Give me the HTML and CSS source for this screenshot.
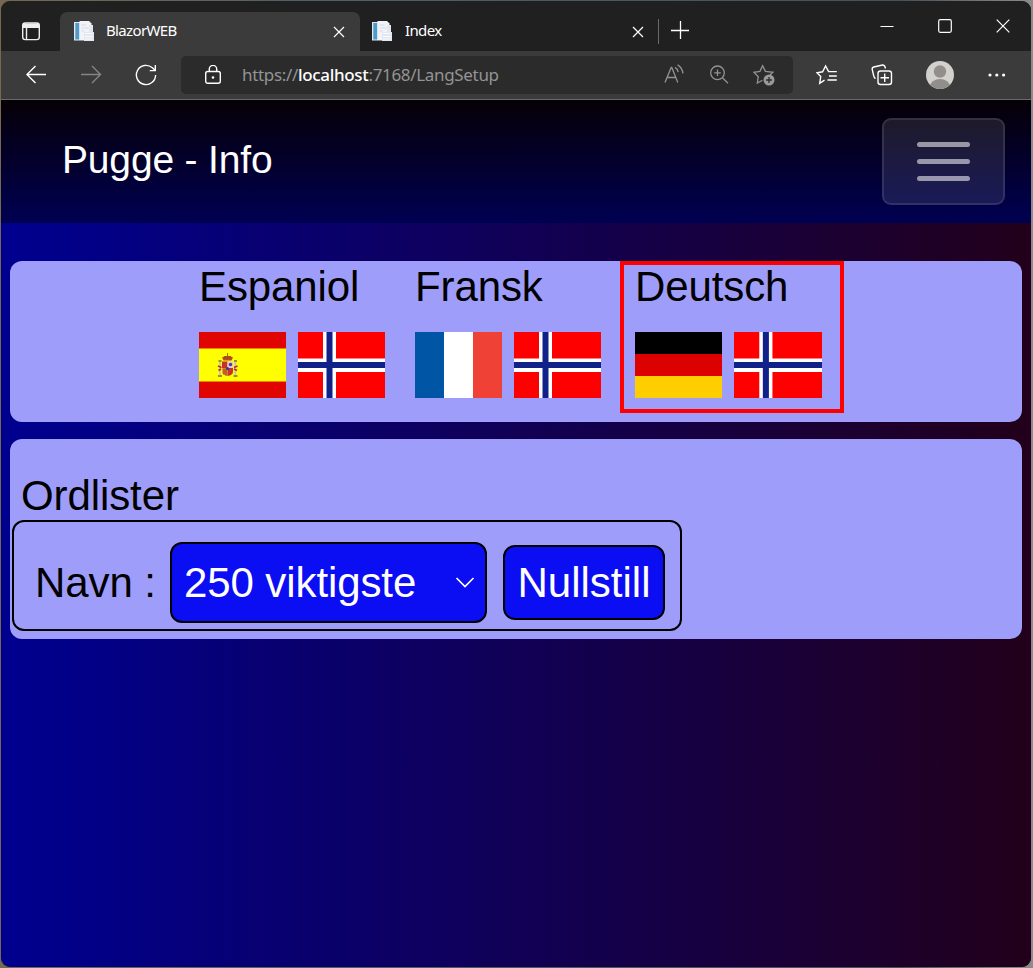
FILE: index.html
```html
<!DOCTYPE html>
<html lang="no">
<head>
<meta charset="utf-8">
<title>BlazorWEB</title>
<link rel="stylesheet" href="styles.css">
</head>
<body>
<svg class="defs" width="0" height="0">
  <defs>
    <symbol id="doc" viewBox="0 0 20 20">
      <path d="M0 1h14v18.500H0z" fill="#dfe9f1"/>
      <path d="M1.300 2h4v16.500h-4z" fill="#4e9bcb"/>
      <path d="M5.500 0H15l2.500 2.500V19h-12z" fill="#f1f3f8"/>
      <path d="M7.500 4h5M7.500 7h7M7.500 10h3" stroke="#d5dae5"/>
      <path d="M15 1v3h4v7h1v9H10v-9h5V5" fill="#e4e7ef"/>
      <path d="M11 12.500h7M11 15.500h8M11 18h7" stroke="#f8f9fc" stroke-width="1.200"/>
    </symbol>
    <symbol id="norway" viewBox="0 0 87 66" preserveAspectRatio="none">
      <path fill="#f00" d="M0 0h87v66H0z"/>
      <path fill="#fff" d="M25 0h13v66H25zM0 26.500h87v13.500H0z"/>
      <path fill="#11218a" d="M28.500 0h6v66h-6zM0 30h87v6H0z"/>
    </symbol>
  </defs>
</svg>
<div class="window">
  <div class="tabbar">
    <div class="tab-actions">
      <svg width="20" height="20" viewBox="0 0 20 20" fill="none" stroke="#eee" stroke-width="1.4"><rect x="1.700" y="2" width="16.600" height="16.600" rx="2.600"/><path d="M2 2.500h16v4.500H2z" fill="#eee" stroke="none"/><path d="M5.500 6v12"/></svg>
    </div>
    <div class="tab tab-active">
      <svg class="favicon"><use href="#doc"/></svg>
      <span class="tab-title">BlazorWEB</span>
      <svg class="tab-close" viewBox="0 0 12 12"><path d="M1 1l10 10M11 1L1 11"/></svg>
    </div>
    <div class="tab">
      <svg class="favicon"><use href="#doc"/></svg>
      <span class="tab-title">Index</span>
      <svg class="tab-close" viewBox="0 0 12 12"><path d="M1 1l10 10M11 1L1 11"/></svg>
    </div>
    <div class="tab-divider"></div>
    <svg class="new-tab" width="18" height="18" viewBox="0 0 18 18"><path d="M0 9.500h18M9.500 0v18" stroke="#fff" stroke-width="1.300"/></svg>
    <div class="window-buttons">
      <svg viewBox="0 0 14 14"><path d="M.5 7.500h13"/></svg>
      <svg viewBox="0 0 14 14"><rect x=".7" y=".7" width="12.600" height="12.600" rx="1.500"/></svg>
      <svg viewBox="0 0 14 14"><path d="M.7.7l12.600 12.600M13.300.7L.7 13.300"/></svg>
    </div>
  </div>
  <div class="toolbar">
    <svg class="nav back" viewBox="0 0 22 20"><path d="M21 9.500H1.500M10.500 1L2 9.500l8.500 8.500"/></svg>
    <svg class="nav forward" viewBox="0 0 22 20"><path d="M1 9.500h19.500M12 1l8.500 8.500L12 18"/></svg>
    <svg class="nav reload" viewBox="0 0 22 22"><path d="M20.600 11a9.600 9.600 0 1 1-3.200-7.200l2.800 2.700M20.300 1v5.600h-5.500"/></svg>
    <div class="address">
      <svg class="lock" viewBox="0 0 18 20"><rect x="1.700" y="6.500" width="14.600" height="11.800" rx="2"/><path d="M5.300 6.500V4.100a3.700 3.700 0 0 1 7.400 0v2.400"/><circle cx="9" cy="12.500" r="1.300" fill="#fff" stroke="none"/></svg>
      <span class="url">https://<b>localhost</b>:7168/LangSetup</span>
      <div class="address-icons">
        <svg viewBox="0 0 22 22"><path d="M2 18.500L8.200 3.500h.6l6 15M4.300 13.500h8.600M12 3.300c1.800.9 2.900 2.600 3.200 4.900M14.600.9c3.300 2 5 4.800 5.300 8.600"/></svg>
        <svg viewBox="0 0 22 22"><circle cx="9.500" cy="8.800" r="6.800"/><path d="M6.200 8.800h6.600M9.500 5.500v6.600M14.500 13.800l5.500 5.500"/></svg>
        <svg viewBox="0 0 22 22"><path d="M9.500 16.200L4.300 19l1-6.300L.9 8.300l6-.9 2.700-5.600 2.800 5.600 7.500.9-3.200 3"/><circle cx="16" cy="16" r="5.500" fill="#999" stroke="none"/><path d="M13.100 16h5.800M16 13.100v5.800" stroke="#2b2b2b"/></svg>
      </div>
    </div>
    <svg class="tool favorites" viewBox="0 0 22 22"><path d="M8.500 16.200l-4.800 3.100 1-6.800L1 8.700l5.600-.9 3-5.800 3 5.600h8.200M13 12h7.800M11.500 16h9.300"/></svg>
    <svg class="tool collections" viewBox="0 0 22 22"><path d="M4.500 14.700c-1.200-.8-1.600-1.900-1.900-3.300L1.200 5.300c-.2-1.300.3-2 1.600-2.300L11.500 1c1.400-.2 2.200.4 2.600 2l.3 1.500"/><rect x="7" y="7" width="13.500" height="13.500" rx="2.500"/><path d="M9.500 13.700h8.500M13.700 9.500V18"/></svg>
    <svg class="avatar" viewBox="0 0 28 28"><clipPath id="face"><circle cx="14" cy="14" r="14"/></clipPath><g clip-path="url(#face)"><path d="M0 0h28v28H0z" fill="#d3d1ce"/><circle cx="14" cy="10.500" r="6.200" fill="#928e8b"/><ellipse cx="14" cy="25.500" rx="10" ry="7.500" fill="#928e8b"/></g></svg>
    <svg class="more" viewBox="0 0 18 4" fill="#fff"><circle cx="2" cy="2" r="1.600"/><circle cx="8.800" cy="2" r="1.600"/><circle cx="15.600" cy="2" r="1.600"/></svg>
  </div>
  <div class="page">
    <nav class="navbar">
      <a class="brand">Pugge - Info</a>
      <button class="toggler"><span></span><span></span><span></span></button>
    </nav>
    <main class="content">
      <section class="panel languages">
        <div class="language">
          <div class="language-name">Espaniol</div>
          <div class="flags">
            <svg viewBox="0 0 87 66" preserveAspectRatio="none"><path fill="#e00500" d="M0 0h87v66H0z"/><path fill="#ff0" d="M0 16.500h87v33H0z"/>
              <g><path fill="#bd4a22" d="M23 25.500l3-1.500h5l3 1.500-1.500 3h-8z"/><path stroke="#77501d" stroke-width=".8" d="M28.500 21v6M26 24v3M31 24v3"/><path fill="#c5332b" d="M23 29.500h5.500V36H23z"/><path fill="#e5c7dd" d="M28.500 29.500H34V36h-5.500z"/><path fill="#e8a222" d="M23 36h5.500v8c-3.500-.5-5.500-2-5.500-4z"/><path fill="#c5332b" d="M28.500 36H34v4c0 2-2 3.500-5.500 4z"/><path stroke="#931c2b" d="M25 36.500v6M27 36.500v7"/><circle cx="31.500" cy="32.500" r="1.700" fill="#4e3790"/><circle cx="28.500" cy="36.500" r="1.500" fill="#263e99"/><path stroke="#c9c0c0" stroke-width="1.800" d="M21 30v13M36.300 30v13"/><path stroke="#bd2930" stroke-width="1.500" d="M19 34l3.500 1.500m12.500 0l3.500-1.500M19.500 38.500l2.500-1.500m13 0l3 1.500"/><path stroke="#816c38" stroke-width="1.300" d="M19.500 29h3M35 29h3M19 44h4M34.500 44h4"/></g>
            </svg>
            <svg><use href="#norway"/></svg>
          </div>
        </div>
        <div class="language">
          <div class="language-name">Fransk</div>
          <div class="flags">
            <svg viewBox="0 0 87 66" preserveAspectRatio="none"><path fill="#0055a4" d="M0 0h29v66H0z"/><path fill="#fff" d="M29 0h29v66H29z"/><path fill="#ef4135" d="M58 0h29v66H58z"/></svg>
            <svg><use href="#norway"/></svg>
          </div>
        </div>
        <div class="language selected">
          <div class="language-name">Deutsch</div>
          <div class="flags">
            <svg viewBox="0 0 87 66" preserveAspectRatio="none"><path d="M0 0h87v22H0z"/><path fill="#d00" d="M0 22h87v22H0z"/><path fill="#ffce00" d="M0 44h87v22H0z"/></svg>
            <svg class="wide"><use href="#norway"/></svg>
          </div>
        </div>
      </section>
      <section class="panel wordlists">
        <div class="heading">Ordlister</div>
        <div class="list-form">
          <label class="list-label">Navn :</label>
          <div class="select"><span>250 viktigste</span><svg width="20" height="12" viewBox="0 0 20 12"><path d="M1.500 1L10 9.500 18.500 1" fill="none" stroke="#fff" stroke-width="1.700"/></svg></div>
          <button class="reset">Nullstill</button>
        </div>
      </section>
    </main>
  </div>
</div>
</body>
</html>
```
FILE: styles.css
```css
* { box-sizing: border-box; }
body {
  margin: 0;
  height: 968px;
  padding: 1px 2px 1px 1px;
  overflow: hidden;
  background: linear-gradient(90deg, #75694f 0, #526068 300px, #46515a 900px, #8c8c8c 100%);
  font-family: "Liberation Sans", Arial, sans-serif;
}
svg { display: block; flex: none; }
.defs { position: absolute; }
.window {
  display: flex;
  flex-direction: column;
  height: 966px;
  border-radius: 9px;
  overflow: hidden;
  background: #3b3b3b;
}
.tabbar {
  display: flex;
  height: 50px;
  background: #202020;
  font: 15px "Noto Sans", sans-serif;
  color: #fff;
}
.tab-actions {
  width: 59px;
  padding: 20px 0 0 20px;
}
.tab {
  display: flex;
  align-items: center;
  width: 299px;
  height: 39px;
  margin-top: 11px;
  padding: 0 15px 0 14px;
}
.tab-active {
  width: 300px;
  border-radius: 7px 7px 0 0;
  background: #3b3b3b;
}
.tab + .tab:not(.tab-active) { padding-left: 12px; }
.tab + .tab .tab-title { padding-left: 13px; }
.favicon { width: 20px; height: 20px; margin-bottom: 1px; }
.tab-title {
  flex: 1;
  padding: 0 0 3px 12px;
  font-size: 15px;
  letter-spacing: -.65px;
}
.tab-close {
  width: 12px;
  height: 12px;
  margin-top: 1px;
  stroke: #fff;
  stroke-width: 1.2;
}
.tab-divider {
  width: 1px;
  height: 25px;
  margin: 18px 0 0 -1px;
  background: #6b6b6b;
}
.new-tab { margin: 20px 0 0 12px; }
.window-buttons {
  display: flex;
  gap: 44px;
  margin: 18px 21px 0 auto;
}
.window-buttons svg {
  width: 14px;
  height: 14px;
  fill: none;
  stroke: #fff;
  stroke-width: 1.2;
}
.toolbar {
  display: flex;
  align-items: center;
  height: 49px;
  padding-left: 24px;
  border-bottom: 1px solid #6a6a6a;
}
.nav { height: 20px; width: 22px; fill: none; stroke: #fff; stroke-width: 1.4; }
.forward { margin-left: 33px; stroke: #858585; }
.reload { height: 22px; margin: 0 24px 0 33px; }
.address {
  display: flex;
  align-items: center;
  width: 612px;
  height: 38px;
  padding: 0 18px 0 23px;
  border-radius: 5px;
  background: #2b2b2b;
}
.lock { width: 18px; height: 20px; fill: none; stroke: #fff; stroke-width: 1.4; }
.url {
  flex: 1;
  padding: 0 0 2px 20px;
  font: 17px "Noto Sans", sans-serif;
  letter-spacing: -.33px;
  color: #949494;
}
.url b { font-weight: 500; color: #fff; }
.address-icons { display: flex; gap: 23px; }
.address-icons svg { width: 22px; height: 22px; fill: none; stroke: #929292; stroke-width: 1.3; }
.tool { width: 22px; height: 22px; fill: none; stroke: #fff; stroke-width: 1.4; }
.favorites { margin-left: 23px; }
.collections { margin-left: 33px; }
.avatar { width: 28px; height: 28px; margin-left: 33px; }
.more { width: 18px; height: 4px; margin-left: 34px; }
.page {
  flex: 1;
  background: linear-gradient(90deg, #00008f 0, #00008b 4%, #22001b 100%);
}
.navbar {
  display: flex;
  align-items: center;
  justify-content: space-between;
  height: 123px;
  padding: 0 26px 0 61px;
  background: linear-gradient(180deg, #060006, #000052);
}
.brand {
  padding-bottom: 3px;
  font-size: 39px;
  letter-spacing: -.17px;
  color: #fff;
}
.toggler {
  display: flex;
  flex-direction: column;
  align-items: center;
  justify-content: center;
  gap: 12px;
  width: 123px;
  height: 87px;
  border: 2px solid rgba(255, 255, 255, .1);
  border-radius: 9px;
  background: rgba(255, 255, 255, .1);
}
.toggler span {
  width: 53px;
  height: 5.2px;
  border-radius: 3px;
  background: rgba(255, 255, 255, .55);
}
.content {
  display: flex;
  flex-direction: column;
  gap: 17px;
  padding: 38px 9px 0;
  font-size: 42px;
  letter-spacing: -.1px;
  line-height: 48px;
  color: #000;
}
.panel { border-radius: 12px; background: #9f9dfa; }
.languages {
  display: flex;
  align-items: flex-start;
  height: 161px;
  padding-left: 178px;
}
.language { width: 216px; height: 152px; padding: 2px 11px 0; }
.selected { width: 224px; border: 4px solid #f00; padding-top: 0; }
.selected .language-name { margin-top: -2px; }
.flags { display: flex; gap: 12px; margin-top: 21px; }
.flags svg { width: 87px; height: 66px; }
.flags .wide { width: 88px; }
.wordlists { height: 200px; padding: 33px 2px 0; }
.heading { padding-left: 9px; }
.list-form {
  display: flex;
  align-items: flex-start;
  width: 670px;
  height: 111px;
  padding: 13px 15px 0 21px;
  border: 2px solid #000;
  border-radius: 12px;
}
.list-label { width: 135px; padding-top: 24px; }
.select {
  display: flex;
  align-items: center;
  justify-content: space-between;
  width: 317px;
  height: 81px;
  margin-top: 7px;
  padding: 0 10px 0 12px;
  border: 2px solid #000;
  border-radius: 12px;
  background: #0b0df3;
  color: #fff;
}
.reset {
  width: 162px;
  height: 75px;
  margin: 10px 0 0 16px;
  padding: 0;
  border: 2px solid #000;
  border-radius: 12px;
  background: #0b0df3;
  font: 42px "Liberation Sans", Arial, sans-serif;
  color: #fff;
}
```
